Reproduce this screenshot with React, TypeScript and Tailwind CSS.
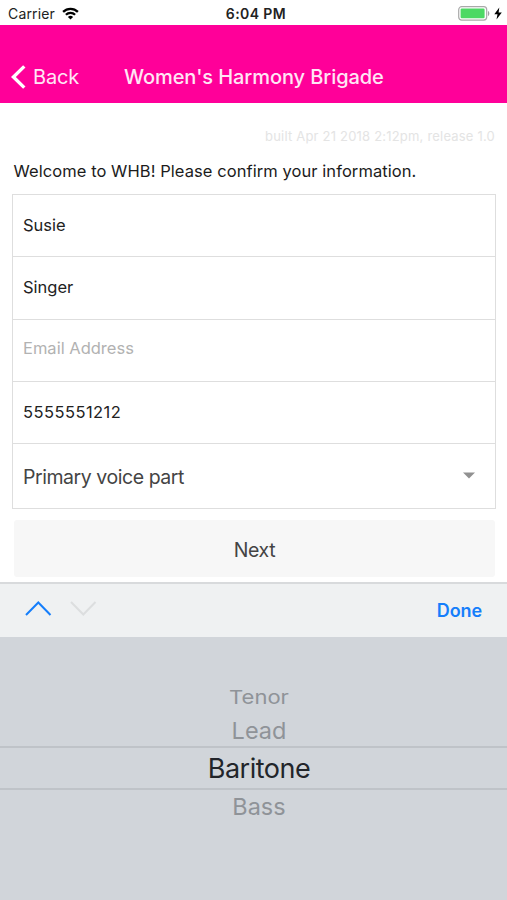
import type { ReactNode } from "react";

function StatusBar() {
  return (
    <div className="grid h-[25px] shrink-0 grid-cols-3 items-center pt-[3px] pl-2 pr-[5px] text-[14px] leading-none text-[#222]">
      <div className="flex items-center gap-[7px]">
        <span className="tracking-[0.15px]">Carrier</span>
        <svg width="17" height="13" viewBox="0 0 17 13" fill="none" stroke="#000" strokeWidth="2.3" className="mb-[2px]">
          <path d="M1.1 4.9a10.6 10.6 0 0 1 14.8 0" />
          <path d="M3.9 7.8a6.6 6.6 0 0 1 9.2 0" />
          <path d="M8.5 12.6 5.9 10a3.7 3.7 0 0 1 5.2 0Z" fill="#000" stroke="none" />
        </svg>
      </div>
      <div className="pl-[2px] text-center font-semibold tracking-[0.4px]">6:04 PM</div>
      <div className="mb-[2px] flex items-center justify-end gap-1">
        <svg width="32" height="15" viewBox="0 0 32 15">
          <rect x="0.7" y="0.7" width="28" height="13.4" rx="3" fill="#fff" stroke="#a9a9a9" strokeWidth="1.2" />
          <rect x="2.6" y="2.6" width="24" height="9.6" rx="1.2" fill="#4cd964" />
          <path d="M30 5v5c1.8-.6 1.8-4.4 0-5Z" fill="#a0a0a0" />
        </svg>
        <svg width="8" height="13" viewBox="0 0 8 13">
          <path d="M5.3 0.5 0.3 7.2h3.2L2.5 12.4 7.8 5.5H4.6Z" fill="#000" />
        </svg>
      </div>
    </div>
  );
}

function Field({ children }: { children: ReactNode }) {
  return (
    <div className="flex h-[62.3px] items-center border-b border-[#dedede] px-[10px] pb-[1px] text-[16.5px] text-[#222]">
      {children}
    </div>
  );
}

export default function App() {
  return (
    <div className="flex h-[900px] w-[507px] flex-col overflow-hidden bg-white font-['Inter',sans-serif]">
      <StatusBar />

      <header className="flex h-[78px] shrink-0 items-end bg-[#ff0099] pb-[11px] pl-[11px] text-[20px] leading-[30px] text-[#ffe6f5]">
        <div className="flex w-[113px] items-center gap-[7px]">
          <svg width="15" height="24" viewBox="0 0 15 24" fill="none" stroke="#fff" strokeWidth="3.4">
            <path d="M13.3 1.4 2.4 12l10.9 10.6" />
          </svg>
          <span className="tracking-[-0.2px]">Back</span>
        </div>
        <h1 className="whitespace-nowrap font-medium tracking-[-0.08px]">Women's Harmony Brigade</h1>
      </header>

      <main className="flex h-[479px] shrink-0 flex-col pl-3 pr-[11px]">
        <p className="mt-[24px] pr-[1px] text-right text-[13px] leading-[18px] tracking-[0.2px] text-[#e4e4e4]">
          built Apr 21 2018 2:12pm, release 1.0
        </p>
        <p className="mt-[15px] whitespace-nowrap pl-[1.5px] text-[16.5px] leading-[22px] tracking-[0.07px] text-[#1c1c1c]">
          Welcome to WHB! Please confirm your information.
        </p>
        <div className="mt-[12px] h-[315px] border border-[#dedede]">
          <Field>Susie</Field>
          <Field>Singer</Field>
          <Field><span className="pb-[3px] text-[#b2b2b2]">Email Address</span></Field>
          <Field><span className="tracking-[0.45px]">5555551212</span></Field>
          <div className="flex h-[64px] items-center justify-between pl-[10px] pr-[20px] pt-[2px] text-[19.5px] text-[#444]">
            <span className="tracking-[-0.45px]">Primary voice part</span>
            <svg width="12" height="7" viewBox="0 0 12 7" className="mb-[3px]">
              <path d="M0 0.5h12L6 6.5Z" fill="#919191" />
            </svg>
          </div>
        </div>
        <button className="ml-[2px] mr-[1px] mt-[11px] h-[57px] rounded-[3px] bg-[#f7f7f7] pt-[4px] text-[19.5px] tracking-[-0.4px] text-[#444]">
          Next
        </button>
      </main>

      <div className="flex h-[55px] shrink-0 items-center border-t-2 border-[#d8dadc] bg-[#eff1f2] pl-[25px] pr-[25px]">
        <svg width="27" height="15" viewBox="0 0 27 15" fill="none" stroke="#157efb" strokeWidth="2" className="mb-[5px]">
          <path d="M1 14 13.3 1.5 25.5 14" />
        </svg>
        <svg width="27" height="15" viewBox="0 0 27 15" fill="none" stroke="#dcdedf" strokeWidth="2" className="mb-[5px] ml-[18px]">
          <path d="M1 1 13.3 13.5 25.5 1" />
        </svg>
        <span className="ml-auto text-[18px] font-semibold tracking-[-0.1px] text-[#157efb]">Done</span>
      </div>

      <div className="flex grow flex-col items-center bg-[#d1d5da] pl-[11px] text-[#8f9398]">
        <div className="mt-[46px] flex h-[28px] origin-center scale-y-[0.86] items-center text-[22px]">Tenor</div>
        <div className="flex h-[35px] items-center pt-[4px] text-[23.5px]">Lead</div>
        <div className="-ml-[11px] flex h-[44px] w-[507px] items-center justify-center border-y-2 border-[#bfc3c8] pl-[11px] pt-[2px] text-[27px] tracking-[-0.5px] text-[#22252a]">
          Baritone
        </div>
        <div className="flex h-[34px] items-center text-[23.5px]">Bass</div>
      </div>
    </div>
  );
}
